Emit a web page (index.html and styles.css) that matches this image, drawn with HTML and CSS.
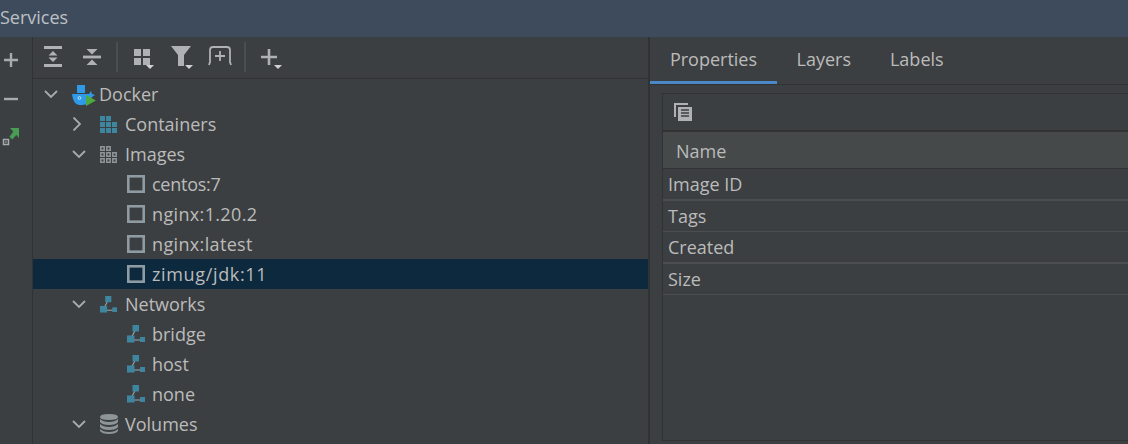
FILE: index.html
```html
<!DOCTYPE html>
<html lang="en">
<head>
<meta charset="utf-8">
<title>Services</title>
<link rel="stylesheet" href="styles.css">
</head>
<body>
<svg class="defs" width="0" height="0" aria-hidden="true">
  <defs>
    <symbol id="open" viewBox="0 0 14 14"><path d="M1 4l6 6 6-6" fill="none" stroke="#a8abad" stroke-width="1.800"/></symbol>
    <symbol id="closed" viewBox="0 0 14 14"><path d="M1.500 .5l6.500 6.500-6.500 6.500" fill="none" stroke="#a8abad" stroke-width="1.800"/></symbol>
    <symbol id="image" viewBox="0 0 18 18"><rect x="1.300" y="1.300" width="15.400" height="15.400" fill="none" stroke="#8f9ba2" stroke-width="2.600"/></symbol>
    <symbol id="net" viewBox="0 0 18 18">
      <path d="M9 4L4 13M6 15h9" stroke="#9aa7b0" stroke-width="1.100"/>
      <rect x="5.500" y="0" width="6.500" height="6.500" fill="#3e86a0"/>
      <rect x="0" y="10.500" width="7.500" height="7" fill="#3e86a0"/>
      <rect x="13" y="12" width="5" height="5" fill="#3e86a0"/>
    </symbol>
    <symbol id="tri" viewBox="0 0 8 4"><path d="M0 0h8L4 4z" fill="#cfd1d2"/></symbol>
  </defs>
</svg>

<header class="titlebar"><span class="title">Services</span></header>

<main class="workspace">
  <aside class="rail">
    <svg class="rail-icon rail-plus" viewBox="0 0 16 16"><path d="M8 1v14M1 8h14" stroke="#a8abad" stroke-width="2.400"/></svg>
    <svg class="rail-icon rail-minus" viewBox="0 0 16 16"><path d="M1 8h14" stroke="#a8abad" stroke-width="2.400"/></svg>
    <svg class="rail-icon rail-go" viewBox="0 0 20 18">
      <path d="M8 0h9v10l-2.600-3-4.200 4.400-2.700-2.700L11.300 3.600z" fill="#499c54"/>
      <rect x="1.500" y="11.500" width="5" height="5" fill="none" stroke="#a8abad" stroke-width="1.500"/>
      <rect x="3" y="13" width="2" height="2" fill="#a8abad" opacity=".5"/>
    </svg>
  </aside>

  <section class="tree-pane">
    <div class="toolbar">
      <svg class="tool tool-expand" viewBox="0 0 18 21"><path d="M0 1.500h18M0 19.500h18" stroke="#afb1b3" stroke-width="2.800"/><path d="M9 5l4.500 4.500h-9zM9 16l-4.500-4.500h9z" fill="#afb1b3"/></svg>
      <svg class="tool tool-collapse" viewBox="0 0 18 18"><path d="M0 9h18" stroke="#afb1b3" stroke-width="2.800"/><path d="M3.500 1h11L9 6.500zM9 11.500l5.500 5.500h-11z" fill="#afb1b3"/></svg>
      <span class="sep"></span>
      <span class="tool drop drop-layout">
        <svg class="tool-svg" viewBox="0 0 16 16"><path d="M0 0h7v7H0zM9 0h7v7H9zM0 9h7v7H0zM9 9h7v7H9z" fill="#afb1b3"/></svg>
        <svg class="tri"><use href="#tri"/></svg>
      </span>
      <span class="tool drop drop-filter">
        <svg class="tool-svg" viewBox="0 0 20 20"><path d="M0 0h20l-7 9v11H7V9z" fill="#afb1b3"/></svg>
        <svg class="tri"><use href="#tri"/></svg>
      </span>
      <svg class="tool tool-wide" viewBox="0 0 24 20"><path d="M1 19l1-3V4q0-3 3-3h14q3 0 3 3v12l1 3M12 5v10M7 10h10" fill="none" stroke="#afb1b3" stroke-width="1.800"/></svg>
      <span class="sep sep-b"></span>
      <span class="tool drop drop-add">
        <svg class="tool-svg" viewBox="0 0 16 16"><path d="M8 0v16M0 8h16" stroke="#afb1b3" stroke-width="2.600"/></svg>
        <svg class="tri"><use href="#tri"/></svg>
      </span>
    </div>

    <ul class="tree">
      <li class="row lvl0">
        <svg class="arrow"><use href="#open"/></svg>
        <svg class="node node-docker" viewBox="0 0 24 21">
          <rect x="5" y="0" width="8" height="8" fill="#2f9be8"/>
          <path d="M0 9h17l2-3 1 3 3 1-3 2q-2 8-10 8H7Q1 19 0 9z" fill="#2f9be8"/>
          <circle cx="7.500" cy="13" r="1.400" fill="none" stroke="#d7ecfb" stroke-width=".8"/>
          <path d="M14 10l10 5.500L14 21z" fill="#4fa83d"/>
        </svg>
        <span>Docker</span>
      </li>
      <li class="row lvl1">
        <svg class="arrow"><use href="#closed"/></svg>
        <svg class="node" viewBox="0 0 17 17"><path d="M0 0h5v5H0zM6 0h5v5H6zM0 6h5v5H0zM6 6h5v5H6zM12 6h5v5h-5zM0 12h5v5H0zM6 12h5v5H6zM12 12h5v5h-5z" fill="#3e86a0"/></svg>
        <span>Containers</span>
      </li>
      <li class="row lvl1">
        <svg class="arrow"><use href="#open"/></svg>
        <svg class="node" viewBox="0 0 17 17"><g fill="none" stroke="#8f9599" stroke-width="1.500"><path d="M.8.800h3.400v3.400H.8zM6.800.800h3.400v3.400H6.800zM.8 6.800h3.400v3.400H.8zM6.800 6.800h3.400v3.400H6.800zM12.800 6.800h3.400v3.400h-3.400zM.8 12.800h3.400v3.400H.8zM6.800 12.800h3.400v3.400H6.800zM12.800 12.800h3.400v3.400h-3.400z"/></g></svg>
        <span>Images</span>
      </li>
      <li class="row lvl2 tight"><svg class="node"><use href="#image"/></svg><span>centos:7</span></li>
      <li class="row lvl2 wide"><svg class="node"><use href="#image"/></svg><span>nginx:1.20.2</span></li>
      <li class="row lvl2 wide"><svg class="node"><use href="#image"/></svg><span>nginx:latest</span></li>
      <li class="row lvl2 selected"><svg class="node"><use href="#image"/></svg><span>zimug/jdk:11</span></li>
      <li class="row lvl1">
        <svg class="arrow"><use href="#open"/></svg>
        <svg class="node"><use href="#net"/></svg>
        <span>Networks</span>
      </li>
      <li class="row lvl2"><svg class="node"><use href="#net"/></svg><span>bridge</span></li>
      <li class="row lvl2"><svg class="node"><use href="#net"/></svg><span>host</span></li>
      <li class="row lvl2"><svg class="node"><use href="#net"/></svg><span>none</span></li>
      <li class="row lvl1">
        <svg class="arrow"><use href="#open"/></svg>
        <svg class="node node-db" viewBox="0 0 18 20"><g fill="#8d9599"><path d="M0 3q0-3 9-3t9 3-9 3-9-3z"/><path d="M0 5q3 3 9 3t9-3v3q-2 3-9 3T0 8z"/><path d="M0 10q3 3 9 3t9-3v3q-2 3-9 3T0 13z"/><path d="M0 15q3 3 9 3t9-3v2q-2 3-9 3T0 17z"/></g></svg>
        <span>Volumes</span>
      </li>
    </ul>
  </section>

  <section class="detail-pane">
    <nav class="tabs">
      <span class="tab active">Properties</span>
      <span class="tab">Layers</span>
      <span class="tab">Labels</span>
    </nav>
    <div class="panel">
      <div class="panel-tools">
        <svg class="copy" viewBox="0 0 18 18">
          <path d="M0 0h14v2H2v12H0z" fill="#afb1b3"/>
          <path d="M4 4h14v14H4z" fill="#afb1b3"/>
          <path d="M7 7h8M7 10h8M7 13h8" stroke="#3c3f41" stroke-width="1.300"/>
        </svg>
      </div>
      <div class="col-head">Name</div>
      <div class="prop prop-a">Image ID</div>
      <div class="prop prop-b">Tags</div>
      <div class="prop prop-c">Created</div>
      <div class="prop prop-d">Size</div>
    </div>
  </section>
</main>
</body>
</html>
```

FILE: styles.css
```css
* { box-sizing: border-box; }

html, body {
  margin: 0;
  padding: 0;
  width: 1128px;
  height: 444px;
  overflow: hidden;
  background: #3c3f41;
  color: #bbbbbb;
  font-family: "Open Sans", "Noto Sans", sans-serif;
  font-size: 18px;
}

.defs { display: block; height: 0; }

.titlebar {
  height: 37px;
  background: #3d4b5c;
  display: flex;
  align-items: center;
  padding-bottom: 3px;
}

.title { color: #bdc1c5; }

.workspace {
  display: flex;
  height: 407px;
}

.rail {
  width: 33px;
  flex: none;
  border-right: 1px solid #323232;
  display: flex;
  flex-direction: column;
  align-items: flex-start;
  padding: 15px 0 0 3px;
}

.rail-icon { display: block; }
.rail-plus { width: 16px; height: 16px; }
.rail-minus { width: 16px; height: 16px; margin-top: 23px; }
.rail-go { width: 20px; height: 18px; margin-top: 21px; margin-left: -1px; }

.tree-pane {
  width: 617px;
  flex: none;
  border-right: 2px solid #323232;
}

.toolbar {
  height: 42px;
  border-bottom: 1px solid #323232;
  display: flex;
  align-items: center;
  padding: 0 0 2px 11px;
}

.tool { display: block; flex: none; width: 18px; height: 18px; }
.tool-expand { height: 21px; }
.tool-collapse { margin-left: 21px; }
.tool-wide { width: 24px; height: 20px; margin-top: -2px; }

.sep {
  width: 2px;
  height: 30px;
  background: #4b4e50;
  margin: 0 16px 0 15px;
  flex: none;
}
.sep-b { margin: 0 15px 0 12px; }

.drop { position: relative; height: 21px; }
.drop-layout { width: 37px; padding-top: 3px; }
.drop-filter { width: 37px; }
.drop-add { width: 24px; padding-top: 3px; }

.tool-svg { display: block; width: 16px; height: 16px; }
.drop-filter .tool-svg { width: 20px; height: 20px; }

.tri {
  position: absolute;
  left: 12px;
  top: 19px;
  width: 8px;
  height: 4px;
}
.drop-filter .tri { left: 14px; }
.drop-add .tri { left: 13px; }

.tree { list-style: none; margin: 0; padding: 0; }

.row {
  height: 30px;
  display: flex;
  align-items: center;
  white-space: nowrap;
}

.row.selected { background: #0d293e; letter-spacing: .65px; }
.row.wide { letter-spacing: .35px; }
.row.tight { letter-spacing: -.25px; }

.lvl0 { padding-left: 11px; }
.lvl1 { padding-left: 39px; }
.lvl2 { padding-left: 94px; }

.arrow { width: 14px; height: 14px; flex: none; margin-right: 14px; }
.node { width: 18px; height: 18px; flex: none; margin-right: 7px; }
.lvl1 .node { width: 17px; height: 17px; margin-right: 8px; }
.lvl1 .node-db { width: 18px; height: 20px; margin-right: 7px; }
.node-docker { width: 24px; height: 21px; margin: 2px 3px 0 0; }

.detail-pane {
  flex: 1;
  min-width: 0;
  display: flex;
  flex-direction: column;
}

.tabs {
  height: 48px;
  flex: none;
  border-bottom: 1px solid #323232;
  display: flex;
}

.tab {
  height: 47px;
  padding: 0 19.500px 3px;
  display: flex;
  align-items: center;
}

.tab.active {
  width: 127px;
  justify-content: center;
  border-bottom: 3px solid #4a88c7;
  padding: 0;
}

.panel {
  margin: 8px 0 3px 12px;
  flex: 1;
  border: 1px solid #323232;
  border-right: 0;
}

.panel-tools {
  height: 38px;
  border-bottom: 2px solid #323232;
  display: flex;
  align-items: center;
  padding-left: 11px;
}

.copy { width: 18px; height: 18px; display: block; }

.col-head {
  height: 37px;
  background: #45494a;
  border-bottom: 1px solid #323232;
  display: flex;
  align-items: center;
  padding: 1px 0 0 13px;
}

.prop {
  display: flex;
  align-items: center;
  padding-left: 5px;
  border-bottom: 1px solid #4b4d4f;
}
.prop-a { height: 32px; border-bottom-width: 2px; }
.prop-b { height: 31px; }
.prop-c { height: 32px; border-bottom-width: 2px; }
.prop-d { height: 31px; }
```
